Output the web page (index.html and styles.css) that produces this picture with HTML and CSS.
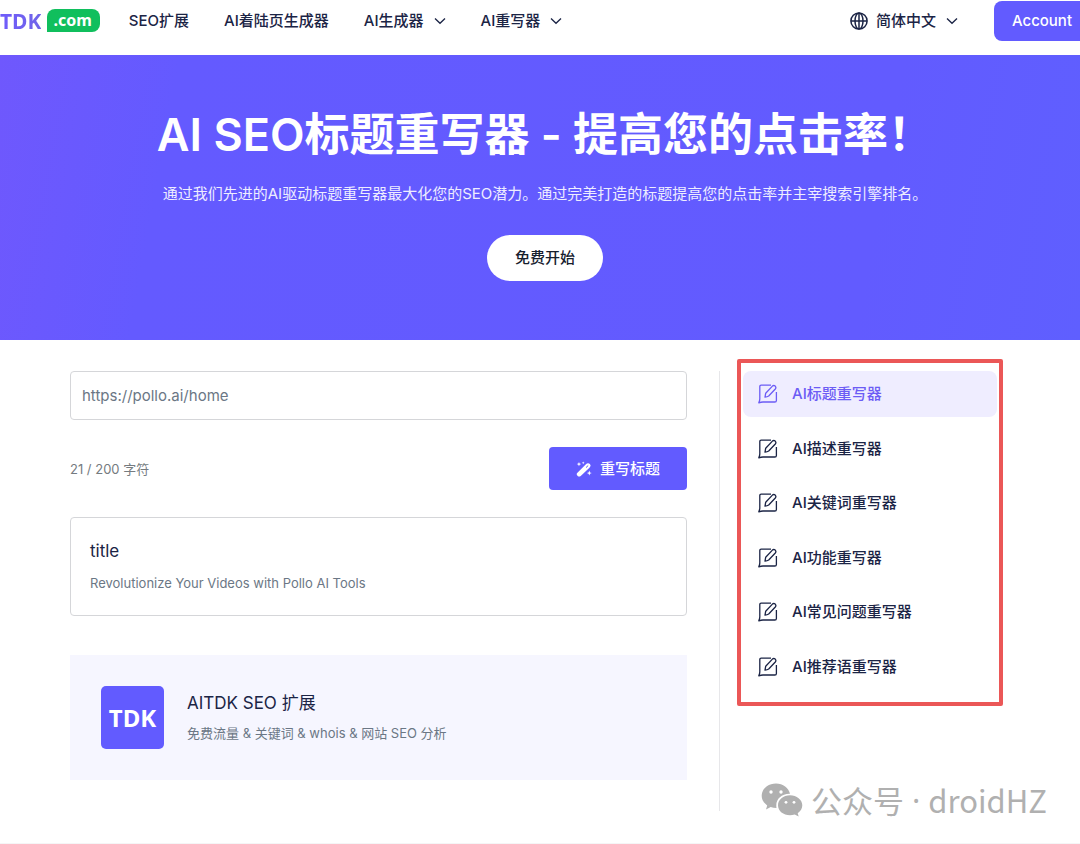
FILE: index.html
```html
<!DOCTYPE html>
<html lang="zh-CN">
<head>
<meta charset="utf-8">
<meta name="viewport" content="width=device-width, initial-scale=1">
<title>AI SEO标题重写器</title>
<link rel="stylesheet" href="styles.css">
</head>
<body>
<svg class="sprite" aria-hidden="true">
  <symbol id="edit" viewBox="0 0 20 20"><path d="M13 1.2H3.2Q1.8 1.2 1.8 2.6V15Q1.8 16.6.8 18.8Q3 18 5 18H16.8Q18.4 18 18.4 16.4V8M7 13.2L7.7 9.2L14.4 2.1Q15.8.9 17.2 2.1Q18.5 3.5 17.3 5L10.7 12Q9.2 13 7 13.2Z"/></symbol>
  <symbol id="chevron" viewBox="0 0 12 8"><path d="M1 1.5L6 6.3L11 1.5"/></symbol>
</svg>
<header class="header">
  <a class="logo" href="#"><span class="logo-name">TDK</span><span class="logo-badge">.com</span></a>
  <nav class="nav" aria-label="主导航">
    <a href="#">SEO扩展</a>
    <a href="#">AI着陆页生成器</a>
    <button type="button">AI生成器<svg class="chevron"><use href="#chevron"/></svg></button>
    <button type="button">AI重写器<svg class="chevron"><use href="#chevron"/></svg></button>
  </nav>
  <button class="language" type="button">
    <svg class="globe" viewBox="0 0 18 18"><circle cx="9" cy="9" r="8.1"/><ellipse cx="9" cy="9" rx="4" ry="8.1"/><path d="M9 1V17M1 9H17"/></svg>
    简体中文<svg class="chevron"><use href="#chevron"/></svg>
  </button>
  <a class="account" href="#">Account</a>
</header>

<section class="hero">
  <h1>AI SEO标题重写器 - 提高您的点击率！</h1>
  <p>通过我们先进的AI驱动标题重写器最大化您的SEO潜力。通过完美打造的标题提高您的点击率并主宰搜索引擎排名。</p>
  <a class="start" href="#rewriter">免费开始</a>
</section>

<main class="content" id="rewriter">
  <div class="workspace">
    <form class="form">
      <input class="url" type="text" aria-label="标题" value="https://pollo.ai/home">
      <div class="form-row">
        <span class="counter">21 / 200 字符</span>
        <button class="submit" type="button">
          <svg class="wand" viewBox="0 0 16 16"><path d="M1.2 12.1L9.7 3.5Q12 1.3 13.8 3Q15.5 4.8 13.2 7L4.7 15Q3.2 16.2 1.7 14.9Q0 13.4 1.2 12.1Z"/><path class="wand-cut" d="M10 6.6L12.2 4.5"/><path d="M3 1L3.6 2.5L5.2 3.1L3.6 3.8L3 5.3L2.3 3.8L.8 3.1L2.3 2.5ZM7.2.4L7.6 1.4L8.6 1.8L7.6 2.2L7.2 3.2L6.8 2.2L5.8 1.8L6.8 1.4ZM13.3 9.6L14 11.4L15.8 12.1L14 12.8L13.3 14.6L12.6 12.8L10.8 12.1L12.6 11.4Z"/></svg>
          重写标题
        </button>
      </div>
    </form>
    <article class="result">
      <h2>title</h2>
      <p>Revolutionize Your Videos with Pollo AI Tools</p>
    </article>
    <a class="promo" href="#">
      <span class="promo-logo">TDK</span>
      <span class="promo-text">
        <strong>AITDK SEO 扩展</strong>
        <span>免费流量 &amp; 关键词 &amp; whois &amp; 网站 SEO 分析</span>
      </span>
    </a>
  </div>
  <aside class="sidebar">
    <nav class="tools" aria-label="重写器">
      <a class="active" href="#" aria-current="page"><svg><use href="#edit"/></svg>AI标题重写器</a>
      <a href="#"><svg><use href="#edit"/></svg>AI描述重写器</a>
      <a href="#"><svg><use href="#edit"/></svg>AI关键词重写器</a>
      <a href="#"><svg><use href="#edit"/></svg>AI功能重写器</a>
      <a href="#"><svg><use href="#edit"/></svg>AI常见问题重写器</a>
      <a href="#"><svg><use href="#edit"/></svg>AI推荐语重写器</a>
    </nav>
  </aside>
</main>
<div class="watermark">
  <svg viewBox="0 0 42 34"><path d="M15 .5C7 .5.7 5.8.7 12.8C.7 16.8 2.8 20.2 6.2 22.4L5 26.4L9.7 24Q12.2 25 15.5 25C14 17 20 10.5 29 10.8C27.8 4.8 22 .5 15 .5Z"/><path d="M29 12.3C22.3 12.3 17 16.8 17 22.3C17 28 22.3 32.3 29 32.3Q31.3 32.3 33.7 31.6L37.7 33.6L36.7 30.2C39.6 28.4 41.3 25.5 41.3 22.3C41.3 16.8 35.7 12.3 29 12.3Z"/><g fill="#fff"><circle cx="10" cy="9" r="1.7"/><circle cx="20" cy="9" r="1.7"/><circle cx="25" cy="19.3" r="1.4"/><circle cx="33" cy="19.3" r="1.4"/></g></svg>
  <span>公众号</span><span class="watermark-dot">·</span><span>droidHZ</span>
</div>
</body>
</html>
```

FILE: styles.css
```css
* { box-sizing: border-box; }

body {
  margin: 0;
  overflow-x: hidden;
  background: #fff;
  color: #1b2445;
  font: 15px/24px Inter, "Noto Sans CJK SC", sans-serif;
}

a { color: inherit; text-decoration: none; }
button { border: 0; padding: 0; background: none; color: inherit; font: inherit; }
h1, h2, p { margin: 0; }
svg { flex: none; fill: none; stroke: currentColor; }

.sprite { position: absolute; width: 0; height: 0; }

.header {
  display: flex;
  align-items: center;
  height: 55px;
  padding-bottom: 14px;
  font-weight: 500;
}

.logo {
  display: flex;
  align-items: center;
  gap: 6px;
  margin-right: 29px;
  font-family: "Noto Sans", sans-serif;
  font-weight: 700;
}

.logo-name {
  background: linear-gradient(90deg, #6f5bfb, #7065e8);
  background-clip: text;
  color: transparent;
  font-size: 21px;
}

.logo-badge {
  padding: 0 8px 1px 6px;
  border-radius: 8px 8px 8px 0;
  background: #10bf5d;
  color: #fff;
  font-size: 16px;
  line-height: 22px;
}

.nav { display: flex; gap: 35px; }
.nav button, .language { display: flex; align-items: center; }
.chevron { width: 12px; height: 8px; margin-left: 10px; stroke-width: 1.3; }

.language { margin-left: auto; margin-right: 36px; }
.globe { width: 18px; height: 18px; margin-right: 8px; stroke-width: 1.5; }

.account {
  padding: 8px 8px 8px 18px;
  border-radius: 8px 0 0 8px;
  background: #625bff;
  color: #fff;
}

.hero {
  display: flex;
  flex-direction: column;
  align-items: center;
  padding: 48px 0 59px 10px;
  background: linear-gradient(100deg, #6f58fd, #645aff 16%, #625bff 80%, #5f5fff);
  color: #fff;
  text-align: center;
}

.hero h1 { font-size: 45px; font-weight: 600; line-height: 64px; }
.hero p { margin: 15px 0 29px; color: #eeedff; }

.start {
  padding: 11px 28px;
  border-radius: 23px;
  background: #fff;
  color: #16202e;
  font-weight: 500;
}

.content {
  display: flex;
  gap: 32px;
  padding: 31px 83px 32px 70px;
  border-bottom: 2px solid #f5f5f6;
}

.workspace { flex: 1; min-width: 0; }

.url {
  display: block;
  width: 100%;
  height: 49px;
  padding: 0 11px;
  border: 1px solid #d5d6d9;
  border-radius: 4px;
  background: #fff;
  color: #6b7785;
  font: inherit;
}

.form-row {
  display: flex;
  align-items: center;
  justify-content: space-between;
  margin: 27px 0;
}

.counter { color: #757b80; font-size: 13px; }

.submit {
  display: flex;
  align-items: center;
  gap: 8px;
  padding: 10px 27px;
  border-radius: 4px;
  background: #625bff;
  color: #fff;
  font-weight: 500;
  line-height: 23px;
}

.wand { width: 16px; height: 16px; fill: #fff; stroke: none; }
.wand-cut { stroke: #625bff; stroke-width: 1; }

.result {
  padding: 20px 19px;
  border: 1px solid #d5d6d9;
  border-radius: 4px;
}

.result h2 { font-size: 17px; font-weight: 400; line-height: 26px; }
.result p { margin-top: 8px; color: #6b7785; font-size: 13px; line-height: 23px; }

.promo {
  display: flex;
  align-items: center;
  gap: 23px;
  margin-top: 39px;
  padding: 31px;
  background: #f6f6ff;
}

.promo-logo {
  width: 63px;
  border-radius: 5px;
  background: #625bff;
  color: #fff;
  font: 700 24px/63px "Noto Sans", sans-serif;
  text-align: center;
}

.promo-text { display: grid; gap: 6px; color: #6b7785; font-size: 13px; }
.promo-text strong { color: #1b2445; font-size: 17px; font-weight: 400; }

.sidebar {
  width: 278px;
  min-height: 440px;
  padding-left: 23px;
  border-left: 1px solid #e7e7ea;
}

.tools {
  position: relative;
  display: grid;
  align-content: space-between;
  min-height: 319px;
}

.tools::after {
  position: absolute;
  inset: -12px -6px -16px;
  border: 4px solid #eb5757;
  border-radius: 2px;
  content: "";
  pointer-events: none;
}

.tools a {
  display: flex;
  align-items: center;
  gap: 14px;
  padding: 11px 15px;
  border-radius: 8px;
  font-weight: 500;
}

.tools svg { width: 20px; height: 20px; stroke-width: 1.3; stroke-linejoin: round; }
.tools .active { background: #efedff; color: #6c5cf5; }

.watermark {
  position: absolute;
  right: 33px;
  top: 782px;
  display: flex;
  align-items: center;
  gap: 8px;
  color: #b0b0b0;
  font: 31px/36px "Noto Sans CJK SC", sans-serif;
}

.watermark svg { width: 42px; height: 34px; fill: #b0b0b0; stroke: none; }
.watermark-dot { font-family: "Noto Sans", sans-serif; }
```
